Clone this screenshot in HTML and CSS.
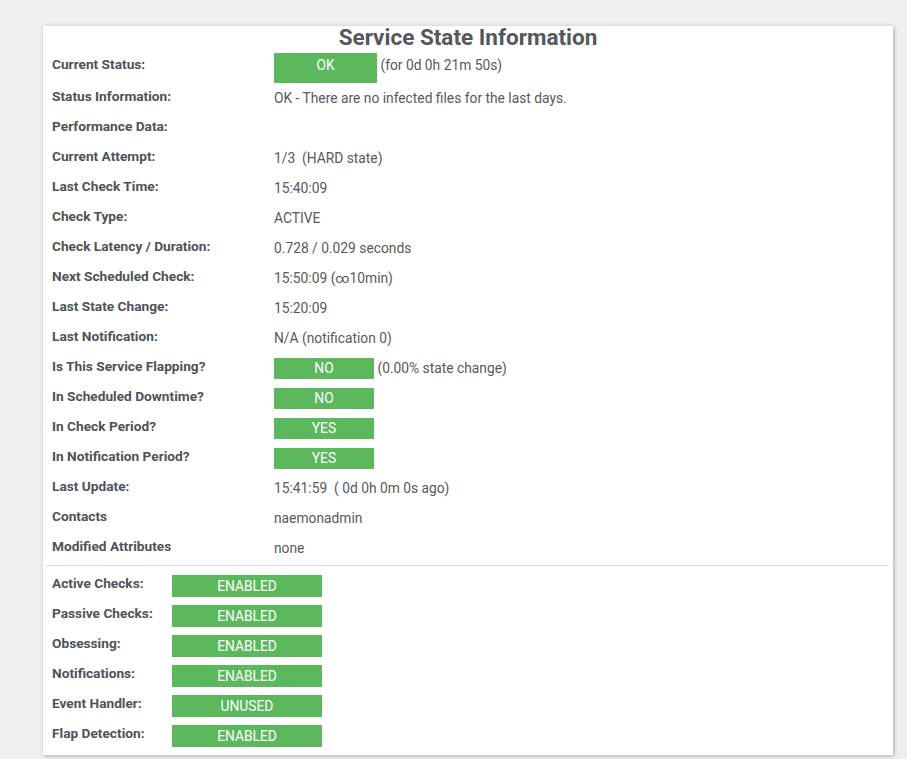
FILE: index.html
```html
<!DOCTYPE html>
<html>
<head>
<meta charset="utf-8">
<link rel="stylesheet" href="styles.css">
</head>
<body>
<div class="panel">
  <h2 class="title">Service State Information</h2>
  <div class="rows">
    <div class="row row-first">
      <div class="label">Current Status:</div>
      <div class="value"><span class="badge badge-big">OK</span> (for 0d 0h 21m 50s)</div>
    </div>
    <div class="row"><div class="label">Status Information:</div><div class="value">OK - There are no infected files for the last days.</div></div>
    <div class="row"><div class="label">Performance Data:</div><div class="value"></div></div>
    <div class="row"><div class="label">Current Attempt:</div><div class="value">1/3&nbsp; (HARD state)</div></div>
    <div class="row"><div class="label">Last Check Time:</div><div class="value">15:40:09</div></div>
    <div class="row"><div class="label">Check Type:</div><div class="value">ACTIVE</div></div>
    <div class="row"><div class="label">Check Latency / Duration:</div><div class="value">0.728 / 0.029 seconds</div></div>
    <div class="row"><div class="label">Next Scheduled Check:</div><div class="value">15:50:09 (∞10min)</div></div>
    <div class="row"><div class="label">Last State Change:</div><div class="value">15:20:09</div></div>
    <div class="row"><div class="label">Last Notification:</div><div class="value">N/A (notification 0)</div></div>
    <div class="row"><div class="label">Is This Service Flapping?</div><div class="value"><span class="badge">NO</span> (0.00% state change)</div></div>
    <div class="row"><div class="label">In Scheduled Downtime?</div><div class="value"><span class="badge">NO</span></div></div>
    <div class="row"><div class="label">In Check Period?</div><div class="value"><span class="badge">YES</span></div></div>
    <div class="row"><div class="label">In Notification Period?</div><div class="value"><span class="badge">YES</span></div></div>
    <div class="row"><div class="label">Last Update:</div><div class="value">15:41:59&nbsp; ( 0d 0h 0m 0s ago)</div></div>
    <div class="row"><div class="label">Contacts</div><div class="value">naemonadmin</div></div>
    <div class="row"><div class="label">Modified Attributes</div><div class="value">none</div></div>
  </div>
  <div class="sep"></div>
  <div class="rows rows-lower">
    <div class="row"><div class="label label-short">Active Checks:</div><div class="flag">ENABLED</div></div>
    <div class="row"><div class="label label-short">Passive Checks:</div><div class="flag">ENABLED</div></div>
    <div class="row"><div class="label label-short">Obsessing:</div><div class="flag">ENABLED</div></div>
    <div class="row"><div class="label label-short">Notifications:</div><div class="flag">ENABLED</div></div>
    <div class="row"><div class="label label-short">Event Handler:</div><div class="flag">UNUSED</div></div>
    <div class="row"><div class="label label-short">Flap Detection:</div><div class="flag">ENABLED</div></div>
  </div>
</div>
</body>
</html>
```
FILE: styles.css
```css
html, body {
  margin: 0;
  padding: 0;
  background: #efefef;
  font-family: Roboto, "Liberation Sans", sans-serif;
}
body {
  padding: 26px 0 0 43px;
  height: 759px;
  box-sizing: border-box;
  overflow: hidden;
}
.panel {
  width: 850px;
  background: #fff;
  box-shadow: 1px 1px 4px rgba(0, 0, 0, 0.28);
  padding-bottom: 4px;
}
.title {
  margin: 0 0 5px 0;
  font-size: 22.5px;
  line-height: 22px;
  font-weight: 700;
  color: #55575c;
  text-align: center;
}
.rows {
  padding-left: 9px;
}
.row {
  display: flex;
  height: 30px;
}
.row-first {
  height: 32px;
}
.label {
  width: 222px;
  flex: none;
  padding-top: 0.5px;
  font-size: 13.7px;
  line-height: 20px;
  font-weight: 700;
  color: #505257;
}
.value {
  padding-top: 3px;
  font-size: 13.8px;
  line-height: 20px;
  color: #58595c;
  white-space: nowrap;
}
.row-first .value {
  padding-top: 0;
}
.badge {
  display: inline-block;
  width: 100px;
  height: 21px;
  line-height: 21px;
  background: #5cb85c;
  color: #fff;
  text-align: center;
  font-size: 13.8px;
}
.badge-big {
  width: 103px;
  height: 30px;
  box-sizing: border-box;
  padding: 2px 0 8px;
  line-height: 20px;
}
.sep {
  height: 1px;
  background: #dcdcdc;
  margin: 0 4px 0 3px;
}
.rows-lower {
  padding-top: 5px;
}
.label-short {
  width: 120px;
  padding-top: 1.5px;
}
.flag {
  margin-top: 4px;
  width: 150px;
  height: 22px;
  box-sizing: border-box;
  padding-top: 1px;
  line-height: 21px;
  background: #5cb85c;
  color: #fff;
  text-align: center;
  font-size: 13.8px;
}
```
